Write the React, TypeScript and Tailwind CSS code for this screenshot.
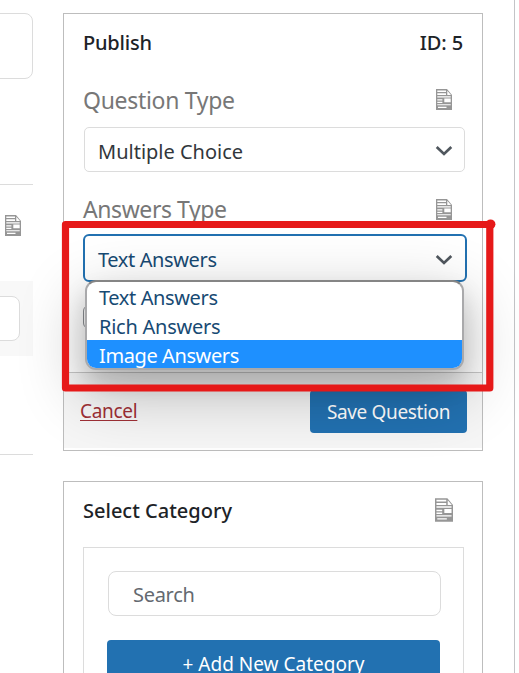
import clsx from 'clsx';

const answerTypes = [
  { label: 'Text Answers', spacing: 'tracking-[-0.38px]' },
  { label: 'Rich Answers', spacing: 'tracking-[-0.25px]' },
  { label: 'Image Answers', spacing: 'tracking-[-0.4px]' },
];

function DocIcon({ className }: { className?: string }) {
  return (
    <svg viewBox="0 0 16 21" className={clsx('shrink-0', className)} aria-hidden="true">
      <path d="M0 0H11L16 6V21H0Z" fill="#969696" />
      <path
        d="M1.3 1.4H10V3H1.3ZM1.3 4.3H10V6H1.3ZM11.3 1.8L15 6H11.3ZM1.3 7.2H14.7V8.4H1.3ZM1.3 10.2H6.4V11.6H1.3ZM8.3 9.6H14.7V13.2H8.3ZM1.3 12.8H6.4V14H1.3ZM1.3 15.2H14.7V16.2H1.3ZM2 17.8H10.5V19H2Z"
        fill="#fff"
      />
    </svg>
  );
}

function Chevron() {
  return (
    <svg viewBox="0 0 18 12" className="mt-[3px] h-3 w-[18px]" aria-hidden="true">
      <path d="M1.7 2L9 9L16.3 2" fill="none" stroke="#50575e" strokeWidth="2.7" />
    </svg>
  );
}

function LeftColumn() {
  return (
    <div className="flex w-[33px] shrink-0 flex-col overflow-hidden pt-[13px]">
      <div className="-ml-3 h-[66px] rounded-lg border border-[#dcdcdc]" />
      <div className="mt-[105px] h-px shrink-0 bg-[#dcdcdc]" />
      <DocIcon className="mt-[30px] ml-[5px] h-[21px] w-4" />
      <div className="mt-[45px] h-[75px] shrink-0 bg-[#f8f8f8] pt-[15px]">
        <div className="-ml-3 h-[45px] w-8 rounded-lg border border-[#dcdcdc] bg-white" />
      </div>
      <div className="mt-[98px] h-px shrink-0 bg-[#dcdcdc]" />
    </div>
  );
}

function PublishPanel() {
  return (
    <section className="flex h-[438px] shrink-0 flex-col border border-[#bdbdbd]">
      <header className="flex h-[58px] items-center justify-between pr-[19px] pl-[19px] text-[20px] font-medium text-[#1d2327]">
        <h2 className="tracking-[-0.2px]">Publish</h2>
        <span className="tracking-[-0.1px]">ID: 5</span>
      </header>

      <div className="flex h-[55px] items-center justify-between pr-[30px] pb-px pl-[19px] text-[23px] text-[#777]">
        <span className="pt-[3px] tracking-[-0.3px]">Question Type</span>
        <DocIcon className="h-[21px] w-4" />
      </div>
      <div className="mr-[17px] ml-5 flex h-[45px] shrink-0 items-center justify-between rounded-[5px] border border-[#dcdcdc] pr-[11px] pl-[13px] text-[20px] text-[#32373c]">
        <span className="pt-[4px]">Multiple Choice</span>
        <Chevron />
      </div>

      <div className="flex h-[62px] items-end justify-between pr-[30px] pb-[12px] pl-[19px] text-[23px] leading-[26px] text-[#777]">
        <span className="tracking-[-0.42px]">Answers Type</span>
        <DocIcon className="mb-[2px] h-[21px] w-4" />
      </div>
      <div className="relative mr-[15px] ml-[19px] h-12 shrink-0">
        <div className="flex h-12 items-center justify-between rounded-[6px] border-2 border-[#2271b1] pr-[12px] pl-[13px] text-[20px] text-[#174a73]">
          <span className="pt-[3px] tracking-[-0.38px]">Text Answers</span>
          <Chevron />
        </div>
        <ul className="absolute top-[46px] left-[2px] z-10 h-[90px] w-[379px] overflow-hidden rounded-[11px] border-2 border-[#a9a9ab] border-t-[#858585] bg-white text-[20px] text-[#174a73] shadow-[0_20px_64px_4px_rgba(0,0,0,0.24),0_14px_24px_rgba(0,0,0,0.15)]">
          {answerTypes.map(({ label, spacing }) => (
            <li
              key={label}
              className={clsx(
                'h-[29px] pl-3 leading-[32px]',
                spacing,
                label === 'Image Answers' && 'bg-[#1e90ff] text-white',
              )}
            >
              {label}
            </li>
          ))}
        </ul>
      </div>
      <div className="mt-[23px] ml-[19px] h-6 w-6 rounded-[6px] border border-[#8c8f94]" />

      <footer className="mt-auto mb-[2px] flex h-[76px] shrink-0 items-center justify-between border-t border-[#c8c8c8] bg-[#f6f6f6] pt-[2px] pr-[15px] pl-4 text-[19px]">
        <a
          href="#"
          className="tracking-[-0.3px] text-[#9f3036] underline decoration-1 underline-offset-[2px] [text-decoration-skip-ink:none]"
        >
          Cancel
        </a>
        <button className="flex h-[43px] w-[157px] items-center justify-center rounded-[4px] bg-[#2271b1] pt-[2px] tracking-[-0.36px] text-white">
          Save Question
        </button>
      </footer>
    </section>
  );
}

function CategoryPanel() {
  return (
    <section className="h-[240px] shrink-0 border border-[#bdbdbd]">
      <header className="flex h-[65px] items-start justify-between pt-4 pr-[29px] pl-[19px]">
        <h2 className="text-[20px] leading-[26px] font-medium text-[#1d2327]">Select Category</h2>
        <DocIcon className="h-6 w-[18px]" />
      </header>
      <div className="mr-[18px] ml-[19px] h-[200px] border border-[#dcdcdc] pt-[23px] pr-[22px] pl-[23px]">
        <div className="ml-px flex h-[45px] items-center rounded-lg border border-[#dcdcdc] pl-6 text-[20px] text-[#646970]">
          <span className="pt-[2px] tracking-[-0.3px]">Search</span>
        </div>
        <button className="mt-6 block h-12 w-[333px] rounded-[4px] bg-[#2271b1] text-[19px] leading-[22px] text-white">
          + Add New Category
        </button>
      </div>
    </section>
  );
}

export default function App() {
  return (
    <div className="relative flex h-[673px] w-[519px] overflow-hidden bg-white font-['Noto_Sans','Open_Sans',sans-serif]">
      <LeftColumn />
      <main className="ml-[30px] flex w-[420px] shrink-0 flex-col gap-[30px] pt-[13px]">
        <PublishPanel />
        <CategoryPanel />
      </main>
      <div className="ml-[31px] w-px bg-[#c3c4c7]" />

      {/* hand-drawn marker round the open select */}
      <svg className="absolute inset-0 z-20 h-full w-full" aria-hidden="true">
        <path
          d="M65.5 224.5H489.8V388H65.5Z"
          fill="none"
          stroke="#e61919"
          strokeWidth="7.2"
          strokeLinejoin="round"
        />
        <circle cx="490.5" cy="224.3" r="4.9" fill="#e61919" />
      </svg>
    </div>
  );
}
